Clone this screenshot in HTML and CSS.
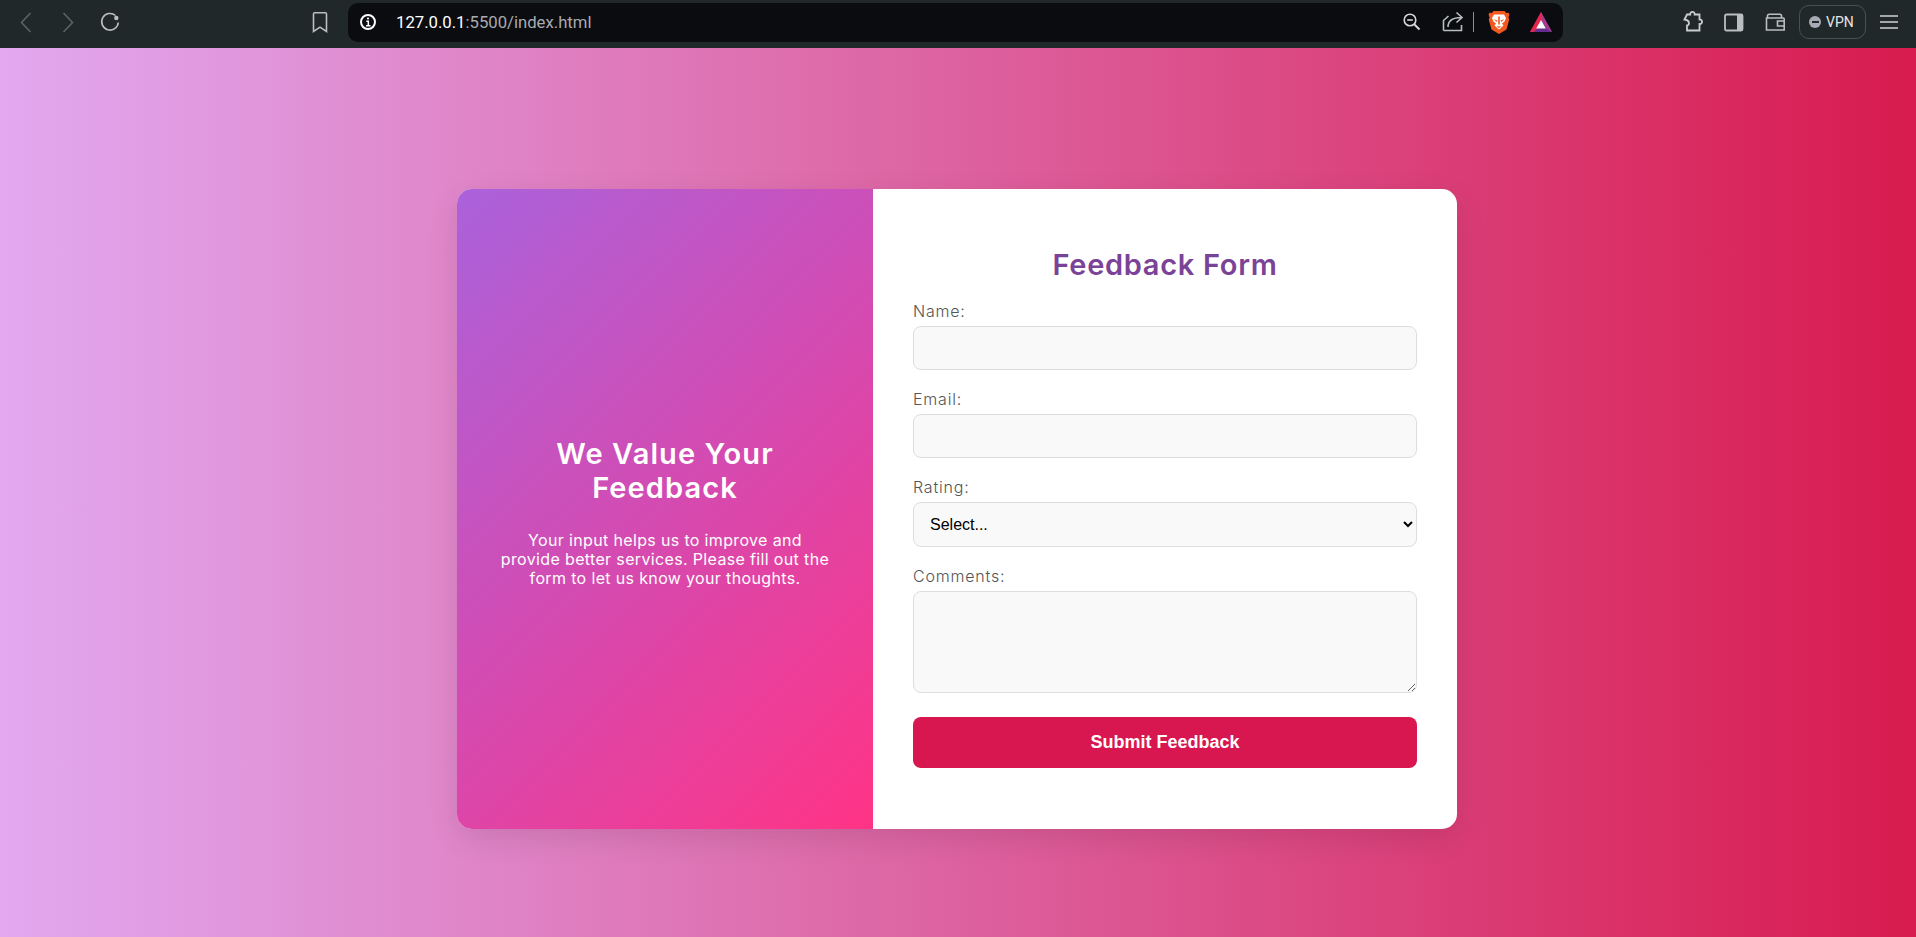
FILE: index.html
```html
<!DOCTYPE html>
<html lang="en">
<head>
  <meta charset="UTF-8"/>
  <meta name="viewport" content="width=device-width, initial-scale=1"/>
  <title>Feedback Form</title>
  <link rel="stylesheet" href="styles.css">
</head>
<body>
  <header class="toolbar">
    <div class="nav-btns">
      <svg class="ico" width="24" height="24" viewBox="0 0 24 24"><path class="dim" d="M16.500 3 7.500 12.500l9 9.500"/></svg>
      <svg class="ico" width="24" height="24" viewBox="0 0 24 24"><path class="dim" d="M7.500 3l9 9.500-9 9.500"/></svg>
      <svg class="ico" width="24" height="24" viewBox="0 0 24 24"><path class="mid" d="M17.500 5.500A8.300 8.300 0 1 0 20.300 12.500"/><circle cx="18.300" cy="8" r="2.200" fill="#b9bec0"/></svg>
    </div>
    <svg class="ico bookmark" width="24" height="24" viewBox="0 0 24 24"><path class="mid" d="M5.500 4c0-.8.5-1.200 1.200-1.200h10.600c.7 0 1.200.4 1.200 1.200v17.500l-6.500-4.300-6.500 4.300z"/></svg>
    <div class="urlbar">
      <svg class="ico" width="18" height="18" viewBox="0 0 18 18"><circle cx="9" cy="9" r="7" fill="none" stroke="#fff" stroke-width="2"/><path d="M7.300 8.300h2v4.200M7 12.700h4.500" fill="none" stroke="#fff" stroke-width="1.500"/><circle cx="9" cy="5.500" r="1.100" fill="#fff"/></svg>
      <span class="url"><b>127.0.0.1</b>:5500/index.html</span>
      <svg class="ico" width="20" height="20" viewBox="0 0 20 20"><circle cx="8" cy="8" r="5.800" fill="none" stroke="#d5d8d9" stroke-width="1.600"/><path d="M12.200 12.200l5.300 5.300" stroke="#d5d8d9" stroke-width="2"/><path d="M5.200 8h5.600" stroke="#d5d8d9" stroke-width="1.600"/></svg>
      <svg class="ico share" width="22" height="22" viewBox="0 0 22 22"><path class="mid" d="M1.500 19.500V9.500L6.500 5M1.500 19.500h18V14"/><path class="mid" d="M6 16c0-6 4-9.500 13.500-9.500M14.500 1.500l5.500 5-5.500 5"/></svg>
      <span class="sep"></span>
      <svg class="ico" width="22" height="24" viewBox="0 0 22 24"><path d="M5.500 1h11l1.800 2 2.200-.2 1 1.700-1 2.800.7 2.500-2.700 9.700L11 24 3.500 19.500.8 9.800l.7-2.500-1-2.800 1-1.700 2.200.2z" fill="#f2591f"/><path d="M6 4.500h10l2 3.500-1.500 3.500-2.500 2 1.500 2-4.500 4-4.500-4 1.500-2-2.500-2L4 8z" fill="#fff"/><path d="M5.800 9.200l3.700 1.300-1 1.500zM16.200 9.200l-3.700 1.300 1 1.500zM8.800 16.200h4.400L11 18.200zM10.200 6.500h1.600v8h-1.600z" fill="#f2591f"/></svg>
      <svg class="ico rewards" width="22" height="20" viewBox="0 0 22 20"><path d="M11 0 22 20H0z" fill="#662d91"/><path d="M11 0 0 20h3.500l3.500-3L11 9z" fill="#e8264a"/><path d="M11 0 22 20l-5-3-6-8z" fill="#a73c8e"/><path d="M11 8l4.800 8.500H6.200z" fill="#fff"/></svg>
    </div>
    <svg class="ico puzzle" width="24" height="24" viewBox="0 0 24 24"><path class="light" d="M6 4.500h3.200c-.5-3.500 5-3.500 4.500 0H18.500v5c3.400-.5 3.400 5 0 4.500v6.500H6v-5C9 15 9 10 3.500 9.500z"/></svg>
    <svg class="ico side" width="24" height="24" viewBox="0 0 24 24"><rect x="3" y="4.500" width="17.500" height="16" rx="1.500" fill="none" stroke="#b9bec0" stroke-width="1.800"/><rect x="15" y="4.500" width="6" height="16" fill="#b9bec0"/></svg>
    <svg class="ico side" width="24" height="24" viewBox="0 0 24 24"><path class="mid" d="M4.500 8V6c0-1 .8-1.700 1.800-1.700h10.500c1 0 1.700.7 1.700 1.700v2M3.500 8h16.800c.6 0 .9.300.9.900V20H3.500zM21 11h-6.500v5H21"/></svg>
    <div class="vpn"><span class="vpn-dot"></span>VPN</div>
    <svg class="ico" width="22" height="22" viewBox="0 0 22 22"><path class="bars" d="M2 5h18M2 11h18M2 17h18"/></svg>
  </header>

  <main class="page">
    <div class="card">
      <section class="intro">
        <h2>We Value Your Feedback</h2>
        <p>Your input helps us to improve and provide better services. Please fill out the form to let us know your thoughts.</p>
      </section>
      <form class="form-side">
        <h1>Feedback Form</h1>
        <label for="name">Name:</label>
        <input type="text" id="name">
        <label for="email">Email:</label>
        <input type="email" id="email">
        <label for="rating">Rating:</label>
        <select id="rating">
          <option>Select...</option>
          <option>Excellent</option>
          <option>Good</option>
          <option>Poor</option>
        </select>
        <label for="comments">Comments:</label>
        <textarea id="comments"></textarea>
        <button type="button">Submit Feedback</button>
      </form>
    </div>
  </main>
</body>
</html>
```

FILE: styles.css
```css
* { box-sizing:border-box; margin:0; padding:0 }
html, body { width:100%; height:100%; overflow:hidden }
body {
  display:flex; flex-direction:column;
  font-family:'Inter', 'Liberation Sans', sans-serif;
}

/* browser chrome */
.toolbar {
  height:48px; flex:none; display:flex; align-items:center; gap:12px;
  background:#212829; padding:0 0 4px 14px;
}
.ico { display:block; flex:none }
.ico path.dim { fill:none; stroke:#5c6365; stroke-width:1.6 }
.ico path.mid { fill:none; stroke:#b9bec0; stroke-width:1.6 }
.ico path.light { fill:none; stroke:#c9cdce; stroke-width:1.8 }
.ico path.bars { fill:none; stroke:#a2a8a9; stroke-width:2 }
.nav-btns { display:flex; align-items:center; gap:18px }
.bookmark { margin-left:174px; margin-right:4px }
.urlbar {
  width:1215px; height:39px; flex:none;
  display:flex; align-items:center;
  background:#0b0c10; border-radius:10px; padding:0 11px;
}
.url { margin-left:19px; font:16.700px 'Roboto', sans-serif; color:#a8abae; flex:1 }
.url b { font-weight:400; color:#fff }
.share { margin-left:20px }
.sep { width:1px; height:20px; background:#8b8f92; margin:0 14px 0 9px }
.rewards { margin-left:20px }
.puzzle { margin-left:106px }
.side { margin-left:5px }
.vpn {
  display:flex; align-items:center; gap:5px; height:34px; padding:0 9px; width:67px;
  border:1px solid #4a5153; border-radius:10px;
  font:14px 'Roboto', sans-serif; color:#e4e6e7;
}
.vpn-dot {
  width:12px; height:12px; flex:none; border-radius:50%; background:#a7a9b4;
  display:flex; align-items:center; justify-content:center;
}
.vpn-dot::after { content:""; width:7px; height:2px; background:#212829 }

/* page */
.page {
  flex:1; display:flex; align-items:center; justify-content:center;
  background:linear-gradient(to right, #e2a8f0, #d81b4f);
}
.card {
  width:1000px; height:640px; margin:33px 2px 0 0; display:flex; overflow:hidden;
  background:#fff; border-radius:15px;
  box-shadow:0 10px 30px rgba(0,0,0,0.1);
}
.intro {
  width:416px; flex:none; display:flex; flex-direction:column; align-items:center; justify-content:center;
  padding:46px 40px 40px; color:#fff; text-align:center;
  background:linear-gradient(135deg, #aa62dc, #ff3385);
}
.intro h2 { font-size:29px; line-height:34px; font-weight:600; margin-bottom:26px; letter-spacing:1.1px }
.intro p { font-size:16px; line-height:19px; letter-spacing:.35px }
.form-side { flex:1; padding:0 40px; display:flex; flex-direction:column }
.form-side h1 {
  font-size:29px; line-height:34px; font-weight:600; color:#7b4397; text-align:center;
  margin:59px 0 19px; letter-spacing:.7px;
}
.form-side label { font-size:16px; line-height:20px; font-weight:300; color:#555; margin-bottom:5px; letter-spacing:.8px }
.form-side input, .form-side select, .form-side textarea {
  display:block; width:100%; border:1px solid #ddd; border-radius:8px;
  background:#f9f9f9; margin-bottom:19px;
}
.form-side input { height:44px }
.form-side select {
  height:45px; padding:0 12px; color:#000;
  font:16px 'Liberation Sans', sans-serif;
}
.form-side textarea { height:102px; margin-bottom:24px; resize:vertical }
.form-side button {
  height:51px; border:none; border-radius:8px; background:#d8164f; color:#fff;
  font:bold 18px 'Liberation Sans', sans-serif; cursor:pointer;
}
```
